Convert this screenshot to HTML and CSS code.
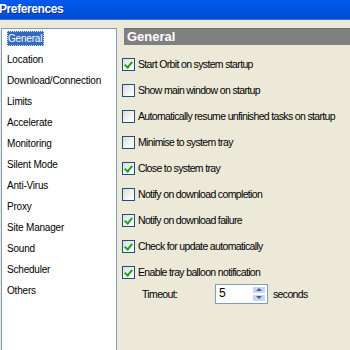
FILE: index.html
```html
<!DOCTYPE html>
<html>
<head>
<meta charset="utf-8">
<link rel="stylesheet" href="styles.css">
</head>
<body>
<div class="titlebar"><span class="title">Preferences</span></div>
<div class="main">
  <ul class="nav">
    <li><span class="sel">General</span></li>
    <li>Location</li>
    <li>Download/Connection</li>
    <li>Limits</li>
    <li>Accelerate</li>
    <li>Monitoring</li>
    <li>Silent Mode</li>
    <li>Anti-Virus</li>
    <li>Proxy</li>
    <li>Site Manager</li>
    <li>Sound</li>
    <li>Scheduler</li>
    <li>Others</li>
  </ul>
  <div class="pane">
    <div class="header">General</div>
    <div class="opts">
      <div class="row"><span class="cb on"></span>Start Orbit on system startup</div>
      <div class="row"><span class="cb"></span>Show main window on startup</div>
      <div class="row"><span class="cb"></span>Automatically resume unfinished tasks on startup</div>
      <div class="row"><span class="cb"></span>Minimise to system tray</div>
      <div class="row"><span class="cb on"></span>Close to system tray</div>
      <div class="row"><span class="cb"></span>Notify on download completion</div>
      <div class="row"><span class="cb on"></span>Notify on download failure</div>
      <div class="row"><span class="cb on"></span>Check for update automatically</div>
      <div class="row"><span class="cb on"></span>Enable tray balloon notification</div>
      <div class="timeout">
        <span class="tlabel">Timeout:</span>
        <span class="spin"><span class="val">5</span><span class="btns"><span class="sb up"></span><span class="sb down"></span></span></span>
        <span class="unit">seconds</span>
      </div>
    </div>
  </div>
</div>
</body>
</html>
```
FILE: styles.css
```css
html, body {
  margin: 0;
  padding: 0;
  background: #ECE9D8;
  font-family: "Liberation Sans", Arial, sans-serif;
  font-size: 11px;
  color: #000;
  overflow: hidden;
  width: 350px;
  height: 350px;
}
.titlebar {
  height: 20px;
  background: linear-gradient(#0058EE 0%, #0055E5 40%, #0050D8 80%, #0A49C8 92%, #3C80F0 100%);
  display: flex;
  align-items: center;
}
.title {
  color: #fff;
  font-weight: bold;
  font-size: 12px;
  letter-spacing: -0.4px;
  margin-left: -1px;
  margin-top: -3px;
  text-shadow: 1px 1px 0 #0A2E8A;
}
.main {
  display: flex;
  padding-top: 8px;
}
.nav {
  flex: none;
  list-style: none;
  margin: 0 0 0 1px;
  padding: 2px 0 0 0;
  width: 114px;
  height: 330px;
  background: #fff;
  border: 1px solid #7F9DB9;
  border-bottom: none;
  font-size: 10px;
}
.nav li {
  height: 21px;
  line-height: 15px;
  padding-left: 5px;
  white-space: nowrap;
  letter-spacing: -0.2px;
}
.nav li .sel {
  display: inline-block;
  background: #316AC5;
  color: #fff;
  padding: 0 2px 0 1px;
  outline: 1px dotted #E8E0A0;
  outline-offset: -1px;
}
.pane {
  flex: 1;
  min-width: 0;
  margin-left: 7px;
}
.header {
  height: 17px;
  background: #808080;
  border-top: 1px solid #707070;
  color: #fff;
  font-weight: bold;
  font-size: 13px;
  line-height: 16px;
  padding-left: 3px;
  box-sizing: border-box;
}
.opts {
  padding-top: 6px;
  font-size: 10.5px;
  letter-spacing: -0.65px;
}
.row {
  height: 26px;
  display: flex;
  align-items: center;
  white-space: nowrap;
}
.cb {
  width: 11px;
  height: 11px;
  border: 1px solid #1C5180;
  background: linear-gradient(135deg, #DCDCD7, #F4F4F1 60%, #fff);
  margin-left: -2px;
  margin-right: 3px;
  position: relative;
  flex: none;
}
.cb.on::after {
  content: "";
  position: absolute;
  left: 3px;
  top: 1px;
  width: 3px;
  height: 6px;
  border: solid #21A121;
  border-width: 0 2px 2px 0;
  transform: rotate(40deg);
}
.timeout {
  display: flex;
  align-items: center;
  height: 22px;
  margin-top: -2px;
}
.tlabel {
  margin-left: 18px;
  width: 73px;
}
.spin {
  display: flex;
  width: 49px;
  height: 16px;
  border: 1px solid #7F9DB9;
  background: #fff;
  padding: 1px;
  letter-spacing: 0;
}
.val {
  flex: 1;
  padding-left: 2px;
  line-height: 14px;
  font-size: 12px;
}
.btns {
  display: flex;
  flex-direction: column;
  width: 14px;
}
.sb {
  flex: 1;
  background: #C6D5FA;
  border: 1px solid #fff;
  position: relative;
  border-radius: 2px;
}
.sb::after {
  content: "";
  position: absolute;
  left: 3px;
  top: 1px;
  border-left: 3px solid transparent;
  border-right: 3px solid transparent;
}
.sb.up::after { border-bottom: 3px solid #4D6185; }
.sb.down::after { border-top: 3px solid #4D6185; }
.unit {
  margin-left: 5px;
}
```
